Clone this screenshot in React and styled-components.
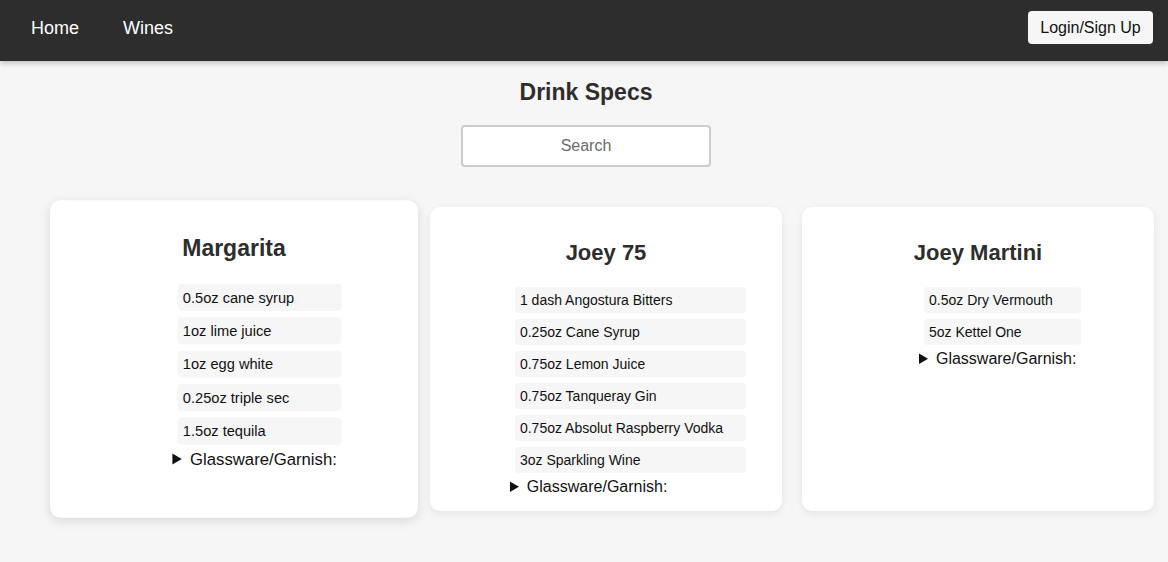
import React from 'react';
import styled, { createGlobalStyle } from 'styled-components';

const GlobalStyle = createGlobalStyle`
    body {
        margin: 0;
        padding: 0;
        background-color: #f6f6f6;
        font-family: "Liberation Sans", Arial, sans-serif;
        color: #2d2d2d;
    }
`;

const Nav = styled.nav`
    height: 61px;
    background-color: #2d2d2d;
    box-shadow: 0 2px 6px rgba(0, 0, 0, 0.25);
    display: flex;
    align-items: center;
    justify-content: space-between;
    padding: 0 15px 4px 31px;
    box-sizing: border-box;
`;
const NavLinks = styled.div`
    display: flex;
    gap: 44px;
`;
const NavLink = styled.a`
    color: #ffffff;
    font-size: 18px;
    text-decoration: none;
`;
const LoginButton = styled.button`
    font-family: inherit;
    font-size: 16px;
    color: #111;
    background-color: #f6f6f6;
    border: none;
    border-radius: 4px;
    height: 33px;
    width: 125px;
    margin-bottom: 2px;
`;
const Main = styled.main`
    display: flex;
    flex-direction: column;
    align-items: center;
    padding-left: 4px;
`;
const PageTitle = styled.h1`
    font-size: 23px;
    font-weight: bold;
    margin: 18px 0 19px;
    line-height: 27px;
`;
const Search = styled.input`
    width: 250px;
    height: 42px;
    box-sizing: border-box;
    border: 2px solid #cccccc;
    border-radius: 4px;
    background: #fff;
    font-family: inherit;
    font-size: 16px;
    text-align: center;
    &::placeholder {
        color: #6b6b6b;
    }
`;
const CardRow = styled.div`
    align-self: stretch;
    display: grid;
    grid-template-columns: repeat(3, 352px);
    gap: 20px;
    padding: 40px 15px 40px 54px;
`;
const Card = styled.div`
    background: #ffffff;
    border-radius: 10px;
    box-shadow: 0 3px 10px rgba(0, 0, 0, ${(p) => (p.$active ? 0.12 : 0.07)});
    display: flex;
    flex-direction: column;
    align-items: center;
    padding: 33px 20px 15px;
    transform: ${(p) => (p.$active ? 'scale(1.045)' : 'none')};
`;
const DrinkName = styled.h2`
    font-size: 22px;
    line-height: 26px;
    margin: 0 0 21px;
`;
const Specs = styled.div`
    display: flex;
    flex-direction: column;
    padding-left: 44px;
`;
const IngredientList = styled.ul`
    list-style: none;
    display: flex;
    flex-direction: column;
    gap: 6px;
    margin: 0 0 5px 5px;
    padding: 0;
`;
const Ingredient = styled.li`
    background: #f6f6f6;
    border-radius: 4px;
    font-size: 14px;
    line-height: 16px;
    color: #111;
    padding: 5px 23px 5px 5px;
    min-width: 157px;
    box-sizing: border-box;
`;
const Garnish = styled.details`
    font-size: 16px;
    line-height: 18px;
    color: #111;
    summary {
        cursor: pointer;
    }
`;

const drinks = [
    {
        name: 'Margarita',
        items: ['0.5oz cane syrup', '1oz lime juice', '1oz egg white', '0.25oz triple sec', '1.5oz tequila'],
    },
    {
        name: 'Joey 75',
        items: [
            '1 dash Angostura Bitters',
            '0.25oz Cane Syrup',
            '0.75oz Lemon Juice',
            '0.75oz Tanqueray Gin',
            '0.75oz Absolut Raspberry Vodka',
            '3oz Sparkling Wine',
        ],
    },
    {
        name: 'Joey Martini',
        items: ['0.5oz Dry Vermouth', '5oz Kettel One'],
    },
];

export default function App() {
    return (
        <div>
            <GlobalStyle />
            <Nav>
                <NavLinks>
                    <NavLink href="#">Home</NavLink>
                    <NavLink href="#">Wines</NavLink>
                </NavLinks>
                <LoginButton>Login/Sign Up</LoginButton>
            </Nav>
            <Main>
                <PageTitle>Drink Specs</PageTitle>
                <Search placeholder="Search" />
                <CardRow>
                    {drinks.map((d, i) => (
                        <Card key={d.name} $active={i === 0}>
                            <DrinkName>{d.name}</DrinkName>
                            <Specs>
                                <IngredientList>
                                    {d.items.map((it) => (
                                        <Ingredient key={it}>{it}</Ingredient>
                                    ))}
                                </IngredientList>
                                <Garnish>
                                    <summary>Glassware/Garnish:</summary>
                                </Garnish>
                            </Specs>
                        </Card>
                    ))}
                </CardRow>
            </Main>
        </div>
    );
}
